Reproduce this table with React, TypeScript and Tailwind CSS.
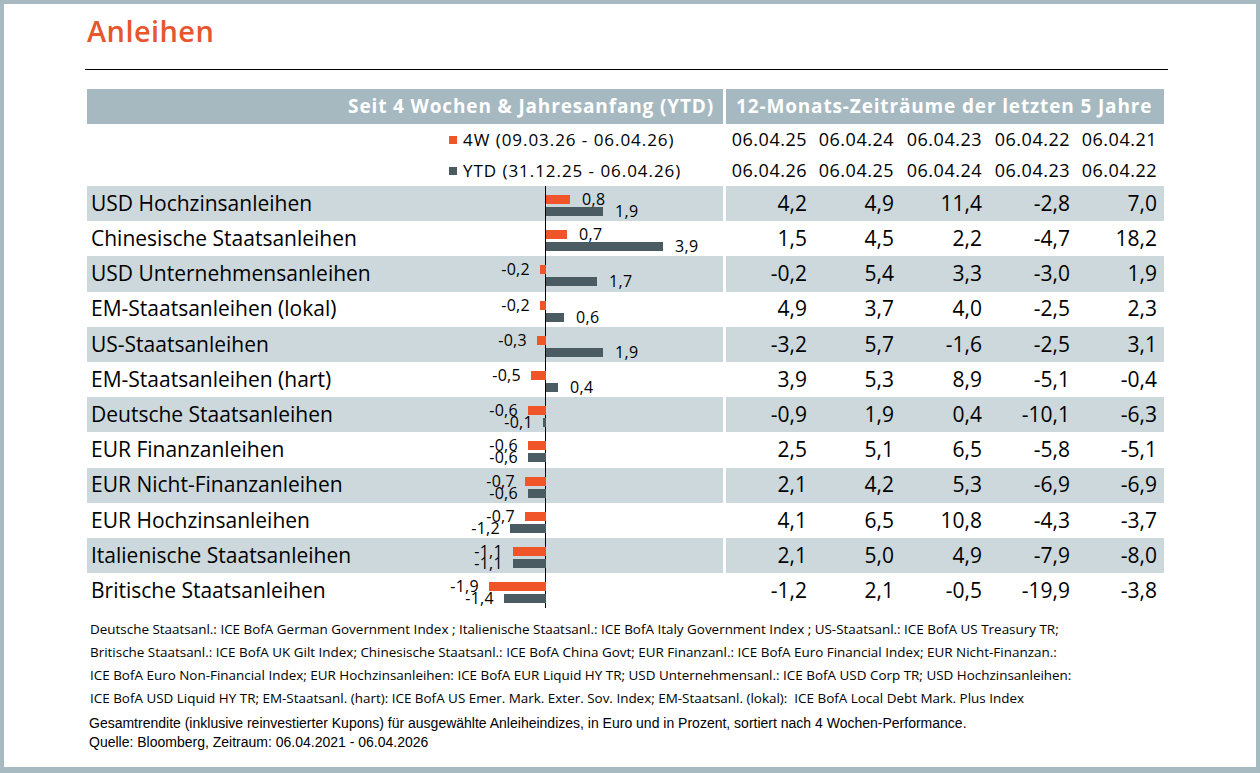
import React from "react";

const rows = [
  { name: "USD Hochzinsanleihen", w4: 0.8, ytd: 1.9, y: ["4,2", "4,9", "11,4", "-2,8", "7,0"] },
  { name: "Chinesische Staatsanleihen", w4: 0.7, ytd: 3.9, y: ["1,5", "4,5", "2,2", "-4,7", "18,2"] },
  { name: "USD Unternehmensanleihen", w4: -0.2, ytd: 1.7, y: ["-0,2", "5,4", "3,3", "-3,0", "1,9"] },
  { name: "EM-Staatsanleihen (lokal)", w4: -0.2, ytd: 0.6, y: ["4,9", "3,7", "4,0", "-2,5", "2,3"] },
  { name: "US-Staatsanleihen", w4: -0.3, ytd: 1.9, y: ["-3,2", "5,7", "-1,6", "-2,5", "3,1"] },
  { name: "EM-Staatsanleihen (hart)", w4: -0.5, ytd: 0.4, y: ["3,9", "5,3", "8,9", "-5,1", "-0,4"] },
  { name: "Deutsche Staatsanleihen", w4: -0.6, ytd: -0.1, y: ["-0,9", "1,9", "0,4", "-10,1", "-6,3"] },
  { name: "EUR Finanzanleihen", w4: -0.6, ytd: -0.6, y: ["2,5", "5,1", "6,5", "-5,8", "-5,1"] },
  { name: "EUR Nicht-Finanzanleihen", w4: -0.7, ytd: -0.6, y: ["2,1", "4,2", "5,3", "-6,9", "-6,9"] },
  { name: "EUR Hochzinsanleihen", w4: -0.7, ytd: -1.2, y: ["4,1", "6,5", "10,8", "-4,3", "-3,7"] },
  { name: "Italienische Staatsanleihen", w4: -1.1, ytd: -1.1, y: ["2,1", "5,0", "4,9", "-7,9", "-8,0"] },
  { name: "Britische Staatsanleihen", w4: -1.9, ytd: -1.4, y: ["-1,2", "2,1", "-0,5", "-19,9", "-3,8"] },
];

const AXIS = 459;
const SCALE = 30;
const fmt = (v: number) => v.toFixed(1).replace(".", ",");

function Bar({ value, top, color }: { value: number; top: number; color: string }) {
  const w = Math.abs(value) * SCALE;
  const left = value >= 0 ? AXIS : AXIS - w;
  const center = top + 4.5;
  return (
    <>
      <div className={`absolute h-[9px] ${color}`} style={{ left, top, width: w }} />
      {value >= 0 ? (
        <span
          className="absolute text-[16px] leading-none tracking-[0.3px] text-black"
          style={{ left: AXIS + w + 12, top: center - 8.5 }}
        >
          {fmt(value)}
        </span>
      ) : (
        <span
          className="absolute text-[16px] leading-none tracking-[0.3px] text-black text-right"
          style={{ right: 636 - (AXIS - w - 10), top: center - 8.5 }}
        >
          {fmt(value)}
        </span>
      )}
    </>
  );
}

function Cols({ vals, className }: { vals: string[]; className?: string }) {
  return (
    <div className={`grid grid-cols-[81px_87px_88px_88px_87px] pr-[7px] ${className ?? ""}`}>
      {vals.map((v, i) => (
        <div key={i} className="text-right">
          {v}
        </div>
      ))}
    </div>
  );
}

export default function App() {
  return (
    <div className="w-[1260px] h-[773px] bg-[#a7bac2] pt-[4px] pl-[4px] pr-[4px] pb-[6px] font-['Open_Sans',sans-serif]">
      <div className="h-full bg-white pl-[81px] pr-[88px] pt-[11px]">
        <h1 className="pl-[2px] text-[29px] font-semibold leading-[32px] text-[#e8562e] tracking-[0.4px]">Anleihen</h1>
        <div className="mt-[22px] h-px bg-black" />

        {/* header bar */}
        <div className="mt-[19px] ml-[2px] flex h-[35px] gap-[3px] text-[19px] font-bold tracking-[0.85px] text-white">
          <div className="flex w-[636px] items-center justify-end bg-[#a6b9c1] pr-[9px]">
            Seit 4 Wochen &amp; Jahresanfang (YTD)
          </div>
          <div className="flex w-[438px] items-center bg-[#a6b9c1] pl-[10px]">
            12-Monats-Zeiträume der letzten 5 Jahre
          </div>
        </div>

        {/* legend + dates */}
        <div className="ml-[2px] flex gap-[3px] text-black">
          <div className="w-[636px] pl-[362px] text-[17px] tracking-[0.95px]">
            <div className="flex h-[31px] items-center gap-[6px]">
              <span className="h-[8px] w-[8px] bg-[#f0552a]" />
              4W (09.03.26 - 06.04.26)
            </div>
            <div className="flex h-[31px] items-center gap-[6px]">
              <span className="h-[8px] w-[8px] bg-[#4a5c62]" />
              YTD (31.12.25 - 06.04.26)
            </div>
          </div>
          <div className="w-[438px] text-[18px] tracking-[0.5px]">
            <Cols vals={["06.04.25", "06.04.24", "06.04.23", "06.04.22", "06.04.21"]} className="h-[31px] items-center" />
            <Cols vals={["06.04.26", "06.04.25", "06.04.24", "06.04.23", "06.04.22"]} className="h-[31px] items-center" />
          </div>
        </div>

        {/* rows */}
        <div className="ml-[2px]">
          {rows.map((r, i) => {
            const bg = i % 2 === 0 ? "bg-[#ccd8dc]" : "bg-white";
            return (
              <div key={r.name} className="flex h-[35.2px] gap-[3px] text-[21px] text-black">
                <div className={`relative w-[636px] ${bg} flex items-center pl-[4px]`}>
                  {r.name}
                  <div className="absolute top-0 bottom-0 w-px bg-black" style={{ left: AXIS - 1 }} />
                  <Bar value={r.w4} top={9} color="bg-[#f0552a]" />
                  <Bar value={r.ytd} top={21} color="bg-[#4a5c62]" />
                </div>
                <div className={`w-[438px] ${bg} flex items-center`}>
                  <Cols vals={r.y} className="w-full" />
                </div>
              </div>
            );
          })}
        </div>

        {/* footnotes */}
        <div className="mt-[10px] pl-[5px] text-[13.45px] leading-[23px] text-black">
          <div>Deutsche Staatsanl.: ICE BofA German Government Index ; Italienische Staatsanl.: ICE BofA Italy Government Index ; US-Staatsanl.: ICE BofA US Treasury TR;</div>
          <div>Britische Staatsanl.: ICE BofA UK Gilt Index; Chinesische Staatsanl.: ICE BofA China Govt; EUR Finanzanl.: ICE BofA Euro Financial Index; EUR Nicht-Finanzan.:</div>
          <div>ICE BofA Euro Non-Financial Index; EUR Hochzinsanleihen: ICE BofA EUR Liquid HY TR; USD Unternehmensanl.: ICE BofA USD Corp TR; USD Hochzinsanleihen:</div>
          <div>ICE BofA USD Liquid HY TR; EM-Staatsanl. (hart): ICE BofA US Emer. Mark. Exter. Sov. Index; EM-Staatsanl. (lokal):&nbsp; ICE BofA Local Debt Mark. Plus Index</div>
        </div>
        <div className="mt-[4px] pl-[4px] font-['Liberation_Sans',Arial,sans-serif] text-[14px] leading-[19px] text-black">
          <div>Gesamtrendite (inklusive reinvestierter Kupons) für ausgewählte Anleiheindizes, in Euro und in Prozent, sortiert nach 4 Wochen-Performance.</div>
          <div>Quelle: Bloomberg, Zeitraum: 06.04.2021 - 06.04.2026</div>
        </div>
      </div>
    </div>
  );
}
